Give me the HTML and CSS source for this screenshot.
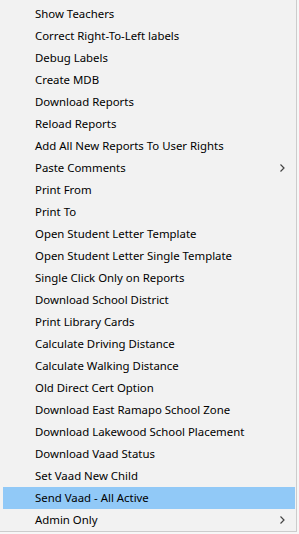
FILE: index.html
```html
<!DOCTYPE html>
<html lang="en">
<head>
  <meta charset="UTF-8">
  <meta name="viewport" content="width=device-width, initial-scale=1.0">
  <title>Context Menu</title>
  <link rel="stylesheet" href="styles.css">
</head>
<body>
  <div class="menu">
    <ul class="menu-list">
      <li class="item">Show Teachers</li>
      <li class="item">Correct Right-To-Left labels</li>
      <li class="item">Debug Labels</li>
      <li class="item">Create MDB</li>
      <li class="item">Download Reports</li>
      <li class="item">Reload Reports</li>
      <li class="item">Add All New Reports To User Rights</li>
      <li class="item has-sub">Paste Comments
        <svg class="arrow" width="5" height="8" viewBox="0 0 5 8"><path d="M0.5 0.5 L4 4 L0.5 7.5" fill="none" stroke="#444" stroke-width="1.2"/></svg>
      </li>
      <li class="item">Print From</li>
      <li class="item">Print To</li>
      <li class="item">Open Student Letter Template</li>
      <li class="item">Open Student Letter Single Template</li>
      <li class="item">Single Click Only on Reports</li>
      <li class="item">Download School District</li>
      <li class="item">Print Library Cards</li>
      <li class="item">Calculate Driving Distance</li>
      <li class="item">Calculate Walking Distance</li>
      <li class="item">Old Direct Cert Option</li>
      <li class="item">Download East Ramapo School Zone</li>
      <li class="item">Download Lakewood School Placement</li>
      <li class="item">Download Vaad Status</li>
      <li class="item">Set Vaad New Child</li>
      <li class="item active">Send Vaad - All Active</li>
      <li class="item has-sub">Admin Only
        <svg class="arrow" width="5" height="8" viewBox="0 0 5 8"><path d="M0.5 0.5 L4 4 L0.5 7.5" fill="none" stroke="#444" stroke-width="1.2"/></svg>
      </li>
    </ul>
  </div>
</body>
</html>
```

FILE: styles.css
```css
html, body {
  margin: 0;
  padding: 0;
  background: #f7f7f7;
}
.menu {
  width: 297px;
  height: 532px;
  box-sizing: border-box;
  background: #f2f2f2;
  border-right: 1px solid #cccccc;
  border-bottom: 1px solid #cccccc;
  padding: 3px 1px 0 3px;
  font-family: "Noto Sans", "Open Sans", sans-serif;
  font-size: 11.4px;
  color: #000;
}
.menu-list {
  list-style: none;
  margin: 0;
  padding: 0;
}
.item {
  height: 22px;
  line-height: 22px;
  padding-left: 32px;
  position: relative;
  white-space: nowrap;
}
.item.active {
  background: #91c9f7;
}
.arrow {
  position: absolute;
  right: 10px;
  top: 7px;
}
```
